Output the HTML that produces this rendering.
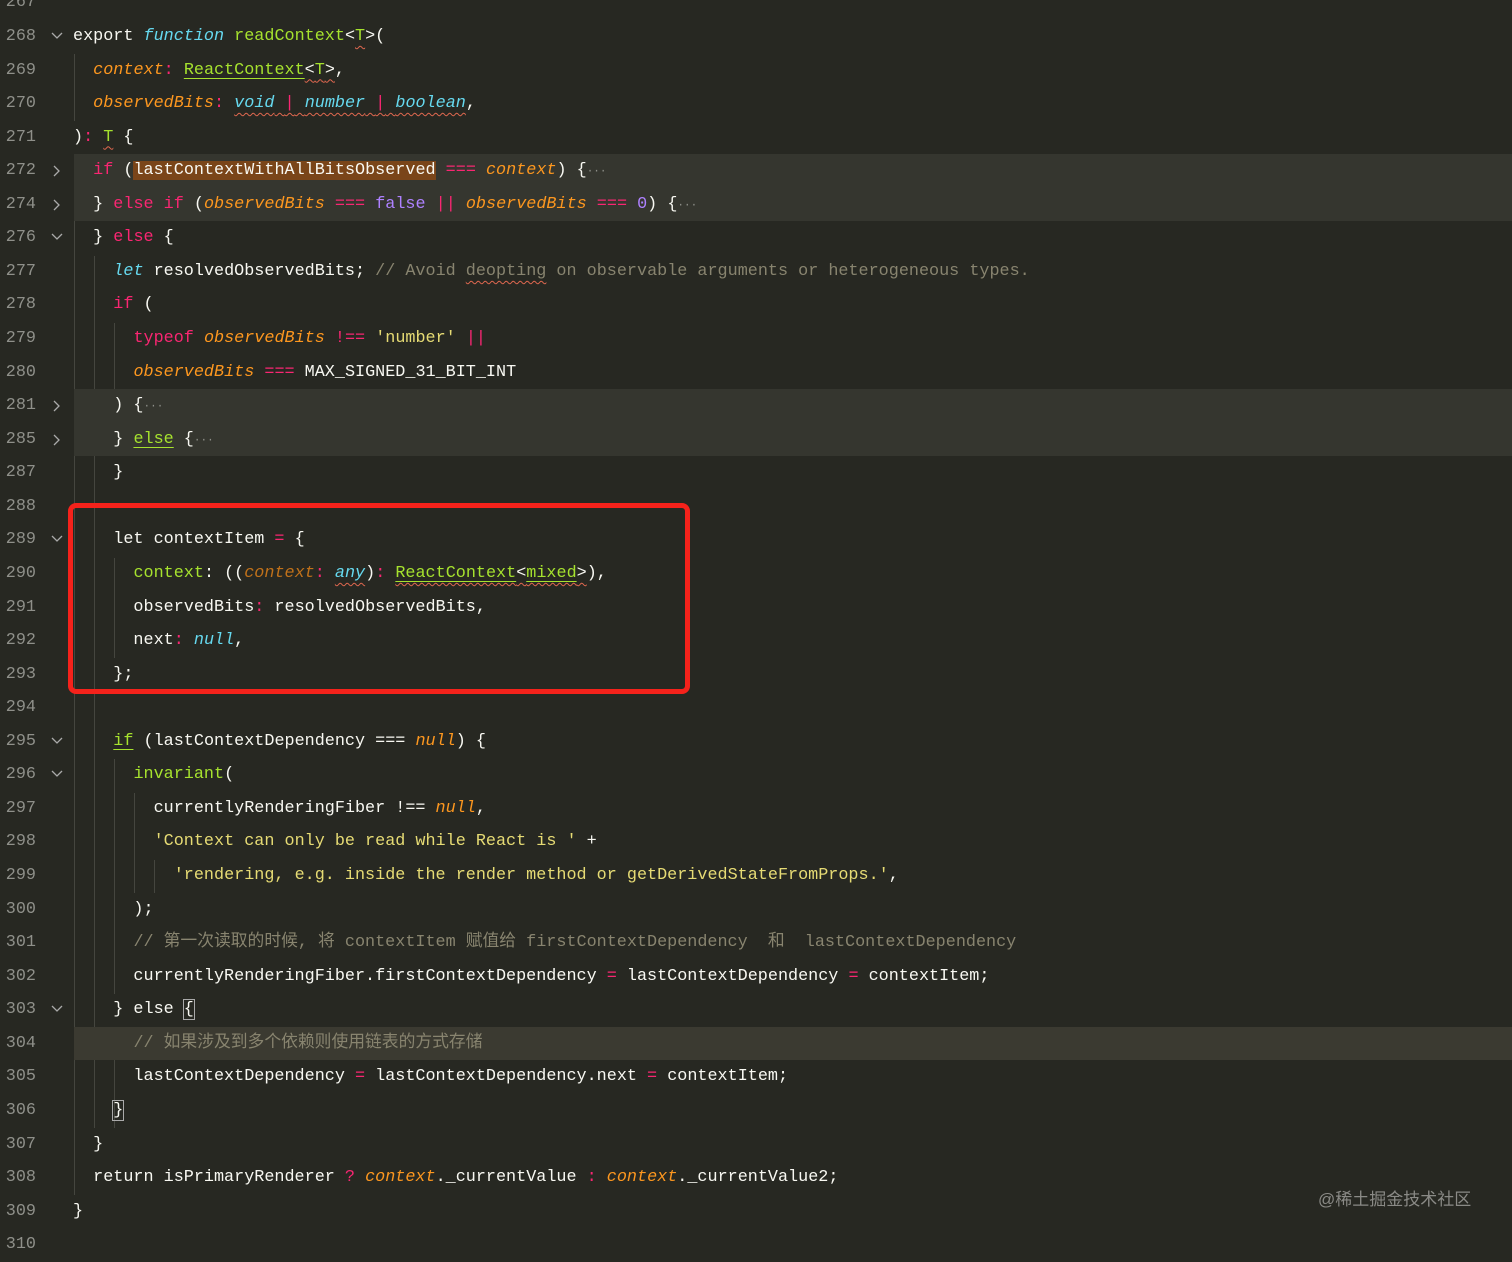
<!DOCTYPE html>
<html><head><meta charset="utf-8"><style>
html,body{margin:0;padding:0;width:1512px;height:1239px;overflow:hidden;background:#272822;}
#c{position:absolute;left:0;top:-13.6px;width:1512px;font-family:"Liberation Mono","Noto Sans CJK SC",monospace;font-size:16.8px;color:#f8f8f2;}
.r{position:relative;height:33.57px;line-height:33.57px;white-space:pre;}
.hl{position:absolute;left:74px;right:0;top:0;bottom:0;background:#35362f;}
.hl2{background:#3b3a31;}
.ln{position:absolute;left:0;width:36px;text-align:right;color:#8f908a;}
.fd{position:absolute;left:51px;top:11px;}
.t{position:absolute;left:73px;}
.k{color:#f92672}.o{color:#fd971f;font-style:italic}.g{color:#a6e22e}.c{color:#66d9ef;font-style:italic}.p{color:#ae81ff}.s{color:#e6db74}.cm{color:#88846f}
.w{text-decoration:underline wavy #e0684f;text-underline-offset:5px;text-decoration-thickness:1px}
.u{text-decoration:underline #a6e22e;text-underline-offset:4px}
.dots{color:#8f908a;font-size:11px}
.gd{position:absolute;width:1px;background:#45463f;}
#box{position:absolute;left:68px;top:503px;width:612px;height:181px;border:5px solid #f5221b;border-radius:8px;}
#wm{position:absolute;left:1318px;top:1185px;font-family:"Liberation Sans","Noto Sans CJK SC",sans-serif;font-size:17px;color:#8a8a86;}
.bx{outline:1px solid #aaa;}
</style></head><body>
<div class="gd" style="left:74px;top:54px;height:67px"></div>
<div class="gd" style="left:74px;top:155px;height:1040px"></div>
<div class="gd" style="left:94px;top:256px;height:872px"></div>
<div class="gd" style="left:114px;top:323px;height:67px"></div>
<div class="gd" style="left:114px;top:558px;height:100px"></div>
<div class="gd" style="left:114px;top:759px;height:235px"></div>
<div class="gd" style="left:114px;top:1028px;height:100px"></div>
<div class="gd" style="left:134px;top:793px;height:100px"></div>
<div class="gd" style="left:154px;top:860px;height:33px"></div>
<div id="c">
<div class="r"><span class="ln">267</span></div>
<div class="r"><span class="ln">268</span><svg class="fd" width="12" height="10"><path d="M1 2 L6 7 L11 2" stroke="#aaa" fill="none" stroke-width="1.3"/></svg><span class="t">export <span class="c">function</span> <span class="g">readContext</span>&lt;<span class="g w">T</span>&gt;(</span></div>
<div class="r"><span class="ln">269</span><span class="t">  <span class="o">context</span><span class="k">:</span> <span class="g u w">ReactContext</span><span class="w">&lt;<span class="g">T</span>&gt;</span>,</span></div>
<div class="r"><span class="ln">270</span><span class="t">  <span class="o">observedBits</span><span class="k">:</span> <span class="w"><span class="c">void</span> <span class="k">|</span> <span class="c">number</span> <span class="k">|</span> <span class="c">boolean</span></span>,</span></div>
<div class="r"><span class="ln">271</span><span class="t">)<span class="k">:</span> <span class="g w">T</span> {</span></div>
<div class="r"><div class="hl"></div><span class="ln">272</span><svg class="fd" width="12" height="12"><path d="M3 1 L8 6 L3 11" stroke="#aaa" fill="none" stroke-width="1.3"/></svg><span class="t">  <span class="k">if</span> (<span style="background:#7a4519">lastContextWithAllBitsObserved</span> <span class="k">===</span> <span class="o">context</span>) {<span class="dots">···</span></span></div>
<div class="r"><div class="hl"></div><span class="ln">274</span><svg class="fd" width="12" height="12"><path d="M3 1 L8 6 L3 11" stroke="#aaa" fill="none" stroke-width="1.3"/></svg><span class="t">  } <span class="k">else if</span> (<span class="o">observedBits</span> <span class="k">===</span> <span class="p">false</span> <span class="k">||</span> <span class="o">observedBits</span> <span class="k">===</span> <span class="p">0</span>) {<span class="dots">···</span></span></div>
<div class="r"><span class="ln">276</span><svg class="fd" width="12" height="10"><path d="M1 2 L6 7 L11 2" stroke="#aaa" fill="none" stroke-width="1.3"/></svg><span class="t">  } <span class="k">else</span> {</span></div>
<div class="r"><span class="ln">277</span><span class="t">    <span class="c">let</span> resolvedObservedBits; <span class="cm">// Avoid <span class="w">deopting</span> on observable arguments or heterogeneous types.</span></span></div>
<div class="r"><span class="ln">278</span><span class="t">    <span class="k">if</span> (</span></div>
<div class="r"><span class="ln">279</span><span class="t">      <span class="k">typeof</span> <span class="o">observedBits</span> <span class="k">!==</span> <span class="s">'number'</span> <span class="k">||</span></span></div>
<div class="r"><span class="ln">280</span><span class="t">      <span class="o">observedBits</span> <span class="k">===</span> MAX_SIGNED_31_BIT_INT</span></div>
<div class="r"><div class="hl"></div><span class="ln">281</span><svg class="fd" width="12" height="12"><path d="M3 1 L8 6 L3 11" stroke="#aaa" fill="none" stroke-width="1.3"/></svg><span class="t">    ) {<span class="dots">···</span></span></div>
<div class="r"><div class="hl"></div><span class="ln">285</span><svg class="fd" width="12" height="12"><path d="M3 1 L8 6 L3 11" stroke="#aaa" fill="none" stroke-width="1.3"/></svg><span class="t">    } <span class="g u">else</span> {<span class="dots">···</span></span></div>
<div class="r"><span class="ln">287</span><span class="t">    }</span></div>
<div class="r"><span class="ln">288</span></div>
<div class="r"><span class="ln">289</span><svg class="fd" width="12" height="10"><path d="M1 2 L6 7 L11 2" stroke="#aaa" fill="none" stroke-width="1.3"/></svg><span class="t">    let contextItem <span class="k">=</span> {</span></div>
<div class="r"><span class="ln">290</span><span class="t">      <span class="g">context</span>: ((<span class="o" style="color:#c0711a">context</span><span class="k">:</span> <span class="c w">any</span>)<span class="k">:</span> <span class="w"><span class="g u">ReactContext</span>&lt;<span class="g u">mixed</span>&gt;</span>),</span></div>
<div class="r"><span class="ln">291</span><span class="t">      observedBits<span class="k">:</span> resolvedObservedBits,</span></div>
<div class="r"><span class="ln">292</span><span class="t">      next<span class="k">:</span> <span class="c">null</span>,</span></div>
<div class="r"><span class="ln">293</span><span class="t">    };</span></div>
<div class="r"><span class="ln">294</span></div>
<div class="r"><span class="ln">295</span><svg class="fd" width="12" height="10"><path d="M1 2 L6 7 L11 2" stroke="#aaa" fill="none" stroke-width="1.3"/></svg><span class="t">    <span class="g u">if</span> (lastContextDependency === <span class="o">null</span>) {</span></div>
<div class="r"><span class="ln">296</span><svg class="fd" width="12" height="10"><path d="M1 2 L6 7 L11 2" stroke="#aaa" fill="none" stroke-width="1.3"/></svg><span class="t">      <span class="g">invariant</span>(</span></div>
<div class="r"><span class="ln">297</span><span class="t">        currentlyRenderingFiber !== <span class="o">null</span>,</span></div>
<div class="r"><span class="ln">298</span><span class="t">        <span class="s">'Context can only be read while React is '</span> +</span></div>
<div class="r"><span class="ln">299</span><span class="t">          <span class="s">'rendering, e.g. inside the render method or getDerivedStateFromProps.'</span>,</span></div>
<div class="r"><span class="ln">300</span><span class="t">      );</span></div>
<div class="r"><span class="ln">301</span><span class="t">      <span class="cm">// 第一次读取的时候, 将 contextItem 赋值给 firstContextDependency  和  lastContextDependency</span></span></div>
<div class="r"><span class="ln">302</span><span class="t">      currentlyRenderingFiber.firstContextDependency <span class="k">=</span> lastContextDependency <span class="k">=</span> contextItem;</span></div>
<div class="r"><span class="ln">303</span><svg class="fd" width="12" height="10"><path d="M1 2 L6 7 L11 2" stroke="#aaa" fill="none" stroke-width="1.3"/></svg><span class="t">    } else <span class="bx">{</span></span></div>
<div class="r"><div class="hl hl2"></div><span class="ln">304</span><span class="t">      <span class="cm">// 如果涉及到多个依赖则使用链表的方式存储</span></span></div>
<div class="r"><span class="ln">305</span><span class="t">      lastContextDependency <span class="k">=</span> lastContextDependency.next <span class="k">=</span> contextItem;</span></div>
<div class="r"><span class="ln">306</span><span class="t">    <span class="bx">}</span></span></div>
<div class="r"><span class="ln">307</span><span class="t">  }</span></div>
<div class="r"><span class="ln">308</span><span class="t">  return isPrimaryRenderer <span class="k">?</span> <span class="o">context</span>._currentValue <span class="k">:</span> <span class="o">context</span>._currentValue2;</span></div>
<div class="r"><span class="ln">309</span><span class="t">}</span></div>
<div class="r"><span class="ln">310</span></div>
</div>
<div id="box"></div>
<div id="wm">@稀土掘金技术社区</div>
</body></html>
